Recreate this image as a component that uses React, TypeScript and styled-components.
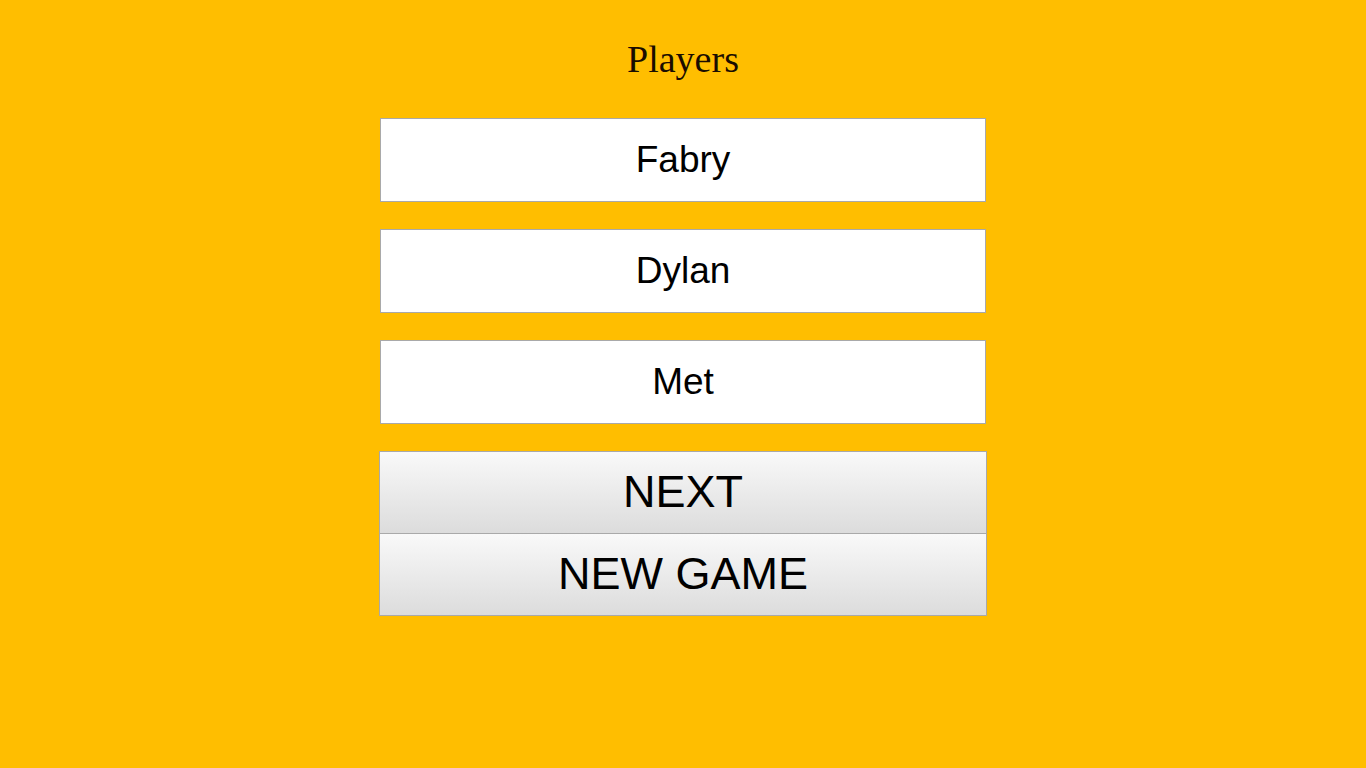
import React from "react";
import styled, { createGlobalStyle } from "styled-components";

const Global = createGlobalStyle`
  html, body { margin: 0; padding: 0; background: #ffbe00; }
  body { font-family: "Liberation Serif", "Times New Roman", serif; }
`;

const Page = styled.main`
  min-height: 768px;
  display: flex;
  flex-direction: column;
  align-items: center;
  background: #ffbe00;
`;

const Title = styled.h1`
  margin: 38px 0 0;
  font-family: "Liberation Serif", "Times New Roman", serif;
  font-weight: normal;
  font-size: 38px;
  line-height: 42px;
  color: #1a0d00;
  text-align: center;
`;

const List = styled.div`
  margin-top: 38px;
  width: 606px;
  display: flex;
  flex-direction: column;
  gap: 27px;
`;

const PlayerInput = styled.input`
  box-sizing: border-box;
  width: 606px;
  height: 84px;
  margin: 0;
  padding: 0;
  border: 1px solid #a9a9a9;
  background: #ffffff;
  font-family: "Liberation Sans", Arial, sans-serif;
  font-size: 37px;
  color: #000;
  text-align: center;
  outline: none;
`;

const Buttons = styled.div`
  margin-top: 27px;
  width: 608px;
  display: flex;
  flex-direction: column;
`;

const ActionButton = styled.button<{ $first?: boolean }>`
  box-sizing: border-box;
  width: 608px;
  height: 83px;
  margin: ${(p) => (p.$first ? "0" : "-1px 0 0")};
  padding: 0 0 2px;
  border: 1px solid #a9a9a9;
  background: linear-gradient(#f9f9f9, #dcdcdc);
  font-family: "Liberation Sans", Arial, sans-serif;
  font-size: 45px;
  color: #000;
  text-align: center;
  cursor: pointer;
`;

const players = ["Fabry", "Dylan", "Met"];

export default function App() {
  return (
    <>
      <Global />
      <Page>
        <Title>Players</Title>
        <List>
          {players.map((p) => (
            <PlayerInput key={p} defaultValue={p} />
          ))}
        </List>
        <Buttons>
          <ActionButton $first>NEXT</ActionButton>
          <ActionButton>NEW GAME</ActionButton>
        </Buttons>
      </Page>
    </>
  );
}
